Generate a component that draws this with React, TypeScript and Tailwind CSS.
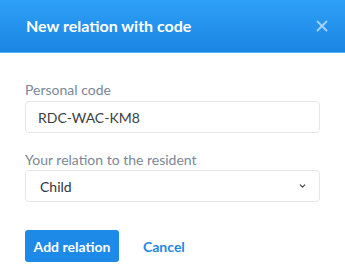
import { useState } from 'react';
import { ChevronDown, X } from 'lucide-react';

const App = () => {
  const [code, setCode] = useState('RDC-WAC-KM8');
  const [relation, setRelation] = useState('Child');

  return (
    <div className="min-h-screen w-full bg-white font-['Lato',sans-serif]">
      <div className="flex h-[53px] items-center justify-between border-b border-[#4fb0f7] bg-gradient-to-b from-[#2ea0f6] to-[#1b86e4] pl-[26px] pr-[14px]">
        <h2 className="text-[16px] font-bold text-white">New relation with code</h2>
        <button type="button" className="text-[#a3d3fa]">
          <X size={18} strokeWidth={2.4} />
        </button>
      </div>

      <form className="px-[25px] pt-[28px]" onSubmit={event => event.preventDefault()}>
        <label className="block">
          <span className="block text-[14px] leading-[17px] text-[#7b8799]">Personal code</span>
          <input
            value={code}
            onChange={event => setCode(event.target.value)}
            className="mt-[3px] block h-[32px] w-full rounded-[4px] border border-[#e4e6ea] pl-[12px] pr-[12px] text-[14px] text-[#3a3f45] outline-none"
          />
        </label>

        <label className="mt-[18px] block">
          <span className="block text-[14px] leading-[17px] text-[#7b8799]">Your relation to the resident</span>
          <div className="relative mt-[2px]">
            <select
              value={relation}
              onChange={event => setRelation(event.target.value)}
              className="block h-[32px] w-full appearance-none rounded-[4px] border border-[#e4e6ea] bg-white px-[14px] text-[14px] text-[#2f343a] outline-none"
            >
              <option>Child</option>
              <option>Spouse</option>
              <option>Sibling</option>
              <option>Friend</option>
            </select>
            <ChevronDown
              size={9}
              strokeWidth={3}
              className="pointer-events-none absolute right-[13px] top-1/2 -translate-y-1/2 text-[#3a3f45]"
            />
          </div>
        </label>

        <div className="mt-[28px] flex items-center gap-[24px]">
          <button
            type="submit"
            className="h-[32px] w-[94px] rounded-[3px] bg-[#1e8ae8] text-[14px] font-bold text-white"
          >
            Add relation
          </button>
          <button type="button" className="text-[14px] font-bold text-[#1e88e5]">
            Cancel
          </button>
        </div>
      </form>
    </div>
  );
};

export default App;
